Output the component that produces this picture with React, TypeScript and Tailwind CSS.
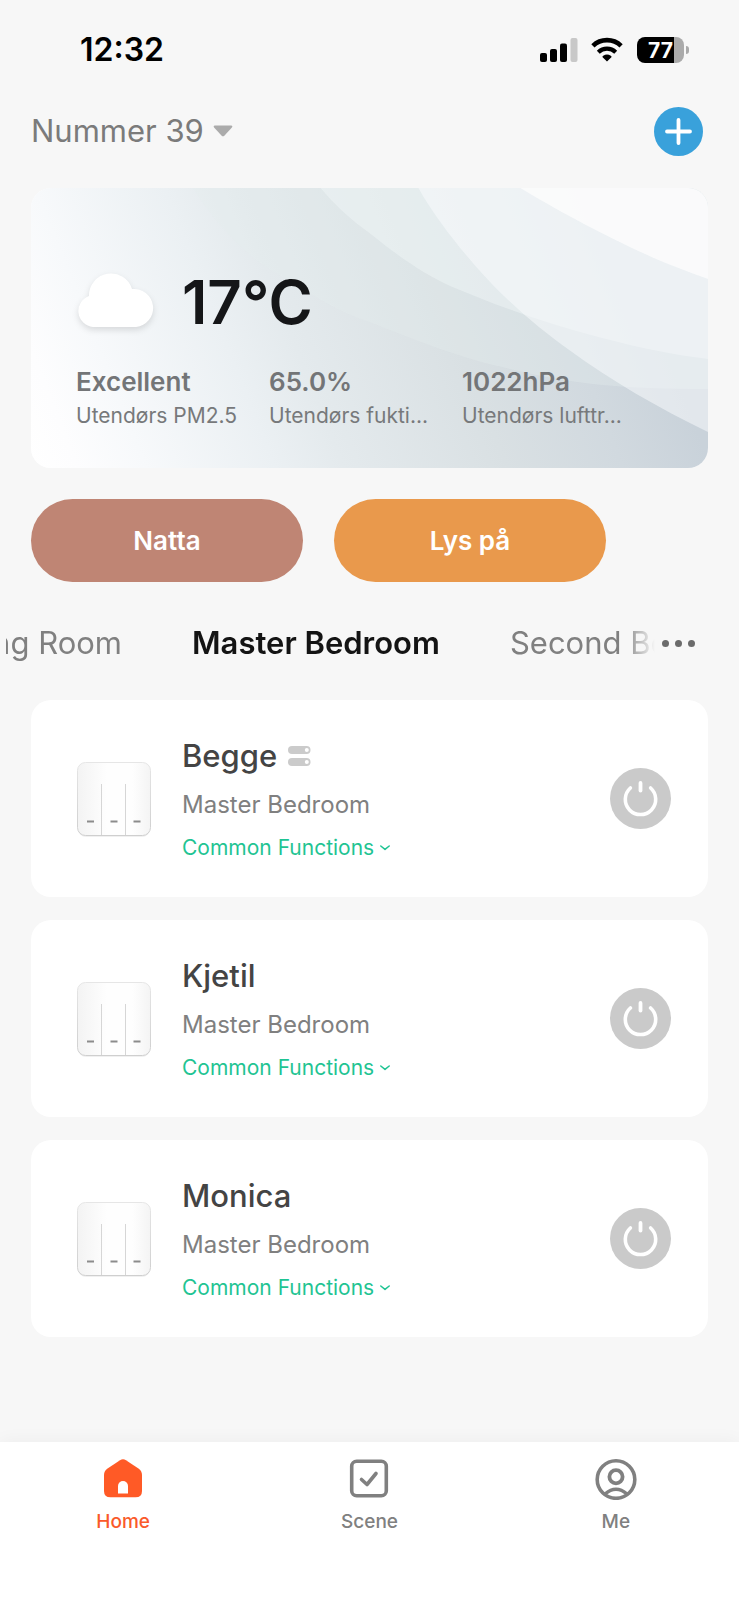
import React, { useState } from 'react';
import clsx from 'clsx';

const metrics = [
  { value: 'Excellent', label: 'Utendørs PM2.5' },
  { value: '65.0%', label: 'Utendørs fukti...' },
  { value: '1022hPa', label: 'Utendørs lufttr...' },
];

const devices = [
  { name: 'Begge', room: 'Master Bedroom', linked: true },
  { name: 'Kjetil', room: 'Master Bedroom', linked: false },
  { name: 'Monica', room: 'Master Bedroom', linked: false },
];

function SignalIcon() {
  return (
    <svg width="38" height="26" viewBox="0 0 38 26" aria-hidden="true">
      <rect x="0" y="16" width="7" height="9" rx="2" />
      <rect x="10" y="12" width="7" height="13" rx="2" />
      <rect x="20" y="6.5" width="7" height="18.5" rx="2" />
      <rect x="30.5" y="1" width="7" height="24" rx="2" fill="#c8c8c8" />
    </svg>
  );
}

function WifiIcon() {
  return (
    <svg width="32" height="26" viewBox="0 0 32 26" aria-hidden="true">
      <path
        d="M16 24.6 L11.6 20.3 Q11 19.3 12.2 18.7 A7.5 7.5 0 0 1 19.8 18.7 Q21 19.3 20.4 20.3 Z"
      />
      <path d="M7.3 15.2 A12.6 12.6 0 0 1 24.7 15.2" fill="none" stroke="#000" strokeWidth="4.2" />
      <path d="M1.9 8.9 A20.2 20.2 0 0 1 30.1 8.9" fill="none" stroke="#000" strokeWidth="4.6" />
    </svg>
  );
}

function StatusBar() {
  return (
    <div className="flex h-24 items-center justify-between pt-1 pr-[50px] pl-20">
      <time className="text-[32px] leading-10 font-semibold text-black">12:32</time>
      <div className="flex items-center">
        <SignalIcon />
        <span className="w-[13px]" />
        <WifiIcon />
        <div className="ml-[14px] flex h-[26px] w-[47px] items-center justify-center rounded-lg bg-linear-to-r from-black from-78% to-[#aaaaaa] to-78% text-[21px] leading-none font-bold text-white">
          77
        </div>
        <span className="ml-[2px] h-2 w-[3px] rounded-r-full bg-[#aaaaaa]" />
      </div>
    </div>
  );
}

function WeatherBackdrop() {
  return (
    <svg
      className="absolute inset-0 h-full w-full"
      viewBox="0 0 678 280"
      preserveAspectRatio="none"
      aria-hidden="true"
    >
      <defs>
        <linearGradient id="sky" gradientUnits="userSpaceOnUse" x1="-97" y1="38" x2="493" y2="-196">
          <stop offset="0" stopColor="#ffffff" />
          <stop offset="0.07" stopColor="#fdfdfe" />
          <stop offset="0.17" stopColor="#f7f9fb" />
          <stop offset="0.36" stopColor="#ebf0f3" />
          <stop offset="0.46" stopColor="#e4eaed" />
          <stop offset="0.7" stopColor="#d9e0e3" />
          <stop offset="0.87" stopColor="#d1d9df" />
          <stop offset="1" stopColor="#c9d2da" />
        </linearGradient>
      </defs>
      <rect width="678" height="280" fill="url(#sky)" />
      <path
        d="M162 0 C187 38 215 69 249 87 C280 106 310 125 339 134 C380 150 430 170 472 179 C540 196 590 201 678 201 V0 Z"
        fill="#e6eeee"
        fillOpacity="0.34"
      />
      <path
        d="M290 0 C305 18 322 33 339 45 C365 66 394 87 422 99 C470 119 520 137 572 150 C610 160 645 167 678 171 V0 Z"
        fill="#f8fbfd"
        fillOpacity="0.36"
      />
      <path
        d="M388 0 C403 27 425 55 446 79 C475 112 508 140 539 162 C580 192 630 221 678 244 V0 Z"
        fill="#fafcfd"
        fillOpacity="0.52"
      />
      <path d="M490 0 C540 30 575 47 606 62 C632 74 655 83 678 91 V0 Z" fill="#fcfcfd" fillOpacity="0.8" />
    </svg>
  );
}

function CloudIcon() {
  return (
    <svg className="h-[60px] w-20 drop-shadow-md" viewBox="0 0 80 60" aria-hidden="true">
      <path d="M17 55 A16 16 0 0 1 13 24 A22 22 0 0 1 56 17 A19 19 0 1 1 60 55 Z" fill="#fff" />
    </svg>
  );
}

function WeatherCard() {
  return (
    <section className="relative h-[280px] overflow-hidden rounded-[20px] bg-[#fdfdfe]">
      <WeatherBackdrop />
      <div className="relative px-[45px] pt-[82px]">
        <div className="flex items-center gap-[26px]">
          <CloudIcon />
          <p className="text-[60px] leading-[64px] font-semibold text-[#151618]">17°C</p>
        </div>
        <dl className="mt-[30px] grid grid-cols-[193px_193px_193px]">
          {metrics.map((m) => (
            <div key={m.label} className="flex flex-col-reverse">
              <dt className="text-[21px] leading-8 whitespace-nowrap text-[#77797b]">{m.label}</dt>
              <dd className="text-[26px] leading-9 font-semibold text-[#737577]">{m.value}</dd>
            </div>
          ))}
        </dl>
      </div>
    </section>
  );
}

function RoomTabs() {
  return (
    <div className="mt-[31px] flex h-[60px] items-center pr-10 pl-[6px] text-[31px] leading-10">
      <nav className="flex min-w-0 flex-1 gap-[70px] overflow-hidden mask-r-from-[calc(100%-32px)] whitespace-nowrap text-[#808080]">
        <button className="flex w-[116px] shrink-0 justify-end overflow-hidden">
          <span>Living Room</span>
        </button>
        <button className="shrink-0 font-semibold text-[#141414]">Master Bedroom</button>
        <button className="shrink-0">Second Bedroom</button>
      </nav>
      <button aria-label="More rooms" className="flex w-11 shrink-0 items-center justify-end gap-[6px] pr-1">
        <span className="size-[7px] rounded-full bg-[#6b6b6b]" />
        <span className="size-[7px] rounded-full bg-[#6b6b6b]" />
        <span className="size-[7px] rounded-full bg-[#6b6b6b]" />
      </button>
    </div>
  );
}

function SwitchPanelIcon() {
  return (
    <svg className="size-[84px] shrink-0" viewBox="0 0 84 84" aria-hidden="true">
      <defs>
        <linearGradient id="panel" x1="0" y1="0" x2="1" y2="0">
          <stop offset="0" stopColor="#f3f3f3" />
          <stop offset="0.4" stopColor="#fefefe" />
          <stop offset="0.75" stopColor="#fefefe" />
          <stop offset="1" stopColor="#f4f4f4" />
        </linearGradient>
        <linearGradient id="edge" x1="0" y1="0" x2="0" y2="1">
          <stop offset="0" stopColor="#e6e6e6" />
          <stop offset="1" stopColor="#cfcfcf" />
        </linearGradient>
      </defs>
      <rect x="6" y="8" width="72" height="72" rx="8" fill="#f0f0f0" />
      <rect x="5.500" y="5.500" width="73" height="73" rx="8" fill="url(#panel)" stroke="url(#edge)" />
      <path d="M29.500 27 V78 M53.500 27 V78" stroke="#d6d6d6" />
      <path d="M15 64.500 H22 M38.500 64.500 H45.500 M61.500 64.500 H68.500" stroke="#8c8c8c" strokeWidth="1.800" />
    </svg>
  );
}

function LinkedIcon() {
  return (
    <svg className="h-5 w-6" viewBox="0 0 24 20" aria-hidden="true">
      <rect x="1" y="0" width="22.500" height="8" rx="4" fill="#cbcbcb" />
      <rect x="1" y="12" width="22.500" height="8" rx="4" fill="#cbcbcb" />
      <circle cx="19.800" cy="4" r="2" fill="#fff" />
      <circle cx="19.800" cy="16" r="2" fill="#fff" />
    </svg>
  );
}

function DeviceCard({ name, room, linked }: { name: string; room: string; linked: boolean }) {
  const [on, setOn] = useState(false);

  return (
    <li className="flex h-[197px] items-center rounded-[20px] bg-white pr-[37px] pl-[41px]">
      <SwitchPanelIcon />
      <div className="ml-[26px] min-w-0 flex-1">
        <div className="flex items-center gap-[10px]">
          <h2 className="text-[31px] leading-[44px] font-medium text-[#444444]">{name}</h2>
          {linked && <LinkedIcon />}
        </div>
        <p className="mt-[9px] text-[24px] leading-9 text-[#808080]">{room}</p>
        <button className="mt-[9px] flex items-center gap-[6px] text-[21px] leading-8 text-[#1fc493]">
          Common Functions
          <svg className="h-[6px] w-[10px]" viewBox="0 0 10 6" fill="none" aria-hidden="true">
            <path d="M0.800 1 L5 4.400 L9.200 1" stroke="#1fc493" strokeWidth="1.500" strokeLinecap="round" strokeLinejoin="round" />
          </svg>
        </button>
      </div>
      <button
        aria-label={`Toggle ${name}`}
        aria-pressed={on}
        onClick={() => setOn(!on)}
        className={clsx('shrink-0 rounded-full', on ? 'text-[#1fc493]' : 'text-[#cacaca]')}
      >
        <svg className="size-[61px]" viewBox="0 0 61 61" fill="none" aria-hidden="true">
          <circle cx="30.500" cy="30.500" r="30.500" fill="currentColor" />
          <path d="M20.400 20 A15.200 15.200 0 1 0 40.600 20" stroke="#fff" strokeWidth="3.600" strokeLinecap="round" />
          <path d="M30.500 15 V22.500" stroke="#fff" strokeWidth="3.800" strokeLinecap="round" />
        </svg>
      </button>
    </li>
  );
}

function HomeIcon() {
  return (
    <svg className="size-[42px]" viewBox="0 0 42 42" aria-hidden="true">
      <path
        d="M18 2.200 Q21 0.300 24 2.200 L36.800 10.700 Q40 13 40 17 V33 Q40 39.300 33.500 39.300 H8.500 Q2 39.300 2 33 V17 Q2 13 5.200 10.700 Z"
        fill="#ff5a26"
      />
      <path d="M16 35.500 V28 A5 5 0 0 1 26 28 V35.500 Z" fill="#fff" />
    </svg>
  );
}

function SceneIcon() {
  return (
    <svg className="size-[42px]" viewBox="0 0 42 42" fill="none" stroke="#808080" aria-hidden="true">
      <rect x="3.700" y="3.200" width="34.600" height="34.600" rx="5" strokeWidth="3.600" />
      <path d="M13.500 21.500 L19 26.500 L28 15.500" strokeWidth="3.600" strokeLinecap="round" strokeLinejoin="round" />
    </svg>
  );
}

function MeIcon() {
  return (
    <svg className="size-[42px]" viewBox="0 0 42 42" fill="none" stroke="#808080" aria-hidden="true">
      <circle cx="21" cy="21.500" r="18.800" strokeWidth="3.600" />
      <circle cx="21" cy="18.800" r="6.600" strokeWidth="3.800" />
      <path d="M10 36 Q21 26.500 32 36" strokeWidth="3.400" />
    </svg>
  );
}

const navItems = [
  { label: 'Home', icon: HomeIcon, active: true },
  { label: 'Scene', icon: SceneIcon, active: false },
  { label: 'Me', icon: MeIcon, active: false },
];

export default function App() {
  return (
    <div className="flex min-h-screen flex-col bg-[#f7f7f7] font-['Inter',sans-serif]">
      <StatusBar />

      <header className="flex h-[92px] items-center justify-between pr-9 pb-[22px] pl-[31px]">
        <button className="flex items-center gap-[9px] text-[31px] leading-10 text-[#7b7b7b]">
          Nummer 39
          <svg className="h-3 w-5" viewBox="0 0 20 12" aria-hidden="true">
            <path d="M2 0.500 H18 Q20.300 0.800 18.700 2.700 L11.300 10.700 Q10 12 8.700 10.700 L1.300 2.700 Q-0.300 0.800 2 0.500 Z" fill="#ababab" />
          </svg>
        </button>
        <button aria-label="Add device">
          <svg className="size-[49px]" viewBox="0 0 49 49" aria-hidden="true">
            <circle cx="24.500" cy="24.500" r="24.500" fill="#39a1db" />
            <path d="M13 24.500 H36 M24.500 13 V36" stroke="#fff" strokeWidth="3.800" strokeLinecap="round" />
          </svg>
        </button>
      </header>

      <main>
        <div className="px-[31px]">
          <WeatherCard />
          <div className="mt-[31px] flex gap-[31px] text-[26px] leading-9 font-semibold text-white">
            <button className="h-[83px] w-[272px] rounded-full bg-[#bf8574]">Natta</button>
            <button className="h-[83px] w-[272px] rounded-full bg-[#e9994c]">Lys på</button>
          </div>
        </div>

        <RoomTabs />

        <ul className="mt-[27px] flex flex-col gap-[23px] px-[31px] pb-[23px]">
          {devices.map((device) => (
            <DeviceCard key={device.name} {...device} />
          ))}
        </ul>
      </main>

      <footer className="mt-auto bg-white shadow-[0_-2px_16px_rgba(0,0,0,0.04)]">
        <nav className="grid h-[158px] grid-cols-3 items-start pt-4">
          {navItems.map(({ label, icon: Icon, active }) => (
            <a
              key={label}
              href="#"
              className={clsx(
                'flex flex-col items-center gap-2 text-[19px] leading-7 font-medium',
                active ? 'text-[#fa5a2a]' : 'text-[#808080]'
              )}
            >
              <Icon />
              {label}
            </a>
          ))}
        </nav>
      </footer>
    </div>
  );
}
